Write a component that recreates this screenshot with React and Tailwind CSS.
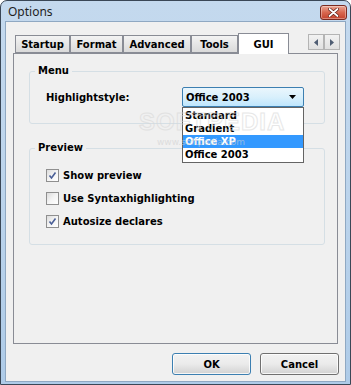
const UI = { fontFamily: '"DejaVu Sans", Verdana, sans-serif' }

export default function App() {
  return (
    <div className="h-[385px] w-[351px] overflow-hidden bg-white" style={UI}>
      <div className="flex h-full flex-col rounded-t-[7px] border border-[#3a4756] bg-gradient-to-b from-[#c4d9ee] via-[#bcd4ec] to-[#aecbe8] px-[4px] pb-[2px]">
        <TitleBar />
        <div className="relative flex flex-1 flex-col border border-[#8fa8c2] bg-[#f0f0f0] px-[7px] pt-[11px]">
          <TabStrip />
          <div className="flex h-[291px] flex-col border border-[#898c95] bg-[#f0f0f0] pl-[15px] pr-[12px]">
            <Group label="Menu" className="mt-[11px] h-[59px]">
              <div className="flex items-center pl-[16px] pt-[10px]">
                <span className="w-[136px] text-[10px] font-bold text-black">Highlightstyle:</span>
                <Combo />
              </div>
            </Group>
            <Group label="Preview" className="mt-[18px] h-[103px]">
              <div className="flex flex-col gap-[10px] pl-[16px] pt-[15px]">
                <Check checked label="Show preview" />
                <Check label="Use Syntaxhighlighting" />
                <Check checked label="Autosize declares" />
              </div>
            </Group>
          </div>
          <div className="mr-[-1px] mt-[9px] flex justify-end gap-[9px]">
            <Button label="OK" primary />
            <Button label="Cancel" />
          </div>
          <Watermark />
        </div>
      </div>
    </div>
  )
}

function TitleBar() {
  return (
    <div className="flex h-[20px] items-center justify-between">
      <span className="pl-[3px] pt-[1px] text-[12px] text-[#1e1e1e]" style={{ fontFamily: '"Noto Sans", "Open Sans", sans-serif' }}>Options</span>
      <div className="mr-[-1px] mt-[3px] flex h-[15px] w-[27px] items-center justify-center rounded-[3px] border border-[#7a2a20] bg-gradient-to-b from-[#eaa593] via-[#d8674f] to-[#c4412b] shadow-[inset_0_0_0_1px_rgba(255,255,255,0.35)]">
        <svg width="11" height="9" viewBox="0 0 11 9">
          <path d="M1.5 1 L9.5 8 M9.5 1 L1.5 8" stroke="#5a1a12" strokeWidth="3.2" strokeLinecap="round" />
          <path d="M1.5 1 L9.5 8 M9.5 1 L1.5 8" stroke="#ffffff" strokeWidth="1.8" strokeLinecap="round" />
        </svg>
      </div>
    </div>
  )
}

function TabStrip() {
  const tabs = [
    { name: 'Startup', w: 'w-[55px]' },
    { name: 'Format', w: 'w-[53px]' },
    { name: 'Advanced', w: 'w-[68px]' },
    { name: 'Tools', w: 'w-[47px]' },
  ]
  return (
    <div className="relative z-10 mb-[-1px] flex h-[21px] items-end pl-[2px]">
      {tabs.map((t) => (
        <div key={t.name} className={`${t.w} mb-[1px] flex h-[18px] items-center justify-center border border-[#898c95] bg-gradient-to-b from-[#f3f3f3] to-[#dadada] pt-[1px] text-[10px] font-bold text-black`}>
          {t.name}
        </div>
      ))}
      <div className="flex h-[21px] w-[51px] items-start justify-center border border-b-0 border-[#898c95] bg-white pt-[3px] text-[10px] font-bold text-black">
        GUI
      </div>
      <div className="ml-auto mr-[-2px] flex self-start pt-[1px]">
        <ArrowBtn dir="left" />
        <ArrowBtn dir="right" />
      </div>
    </div>
  )
}

function ArrowBtn({ dir }) {
  return (
    <div className="flex h-[16px] w-[16px] items-center justify-center border border-[#b4b4b4] bg-gradient-to-b from-[#f2f2f2] to-[#e0e0e0]">
      <svg width="4" height="7" viewBox="0 0 4 7">
        {dir === 'left' ? <path d="M4 0 L0 3.5 L4 7 Z" fill="#4f5d73" /> : <path d="M0 0 L4 3.5 L0 7 Z" fill="#4f5d73" />}
      </svg>
    </div>
  )
}

function Group({ label, className, children }) {
  return (
    <fieldset className={`rounded-[3px] border border-[#d5dfe5] px-0 ${className}`}>
      <legend className="ml-[5px] px-[3px] text-[10px] font-bold leading-[12px] text-black">{label}</legend>
      {children}
    </fieldset>
  )
}

function Combo() {
  const items = ['Standard', 'Gradient', 'Office XP', 'Office 2003']
  return (
    <div className="relative">
      <div className="flex h-[20px] w-[122px] items-center justify-between rounded-[2px] border border-[#3c7fb1] bg-gradient-to-b from-[#eaf6fd] via-[#d9f0fc] to-[#bee6fd] pl-[3px] pr-[7px] text-[10px] font-bold text-black">
        <span className="pt-[1px]">Office 2003</span>
        <svg width="7" height="4" viewBox="0 0 7 4">
          <path d="M0 0 L7 0 L3.5 4 Z" fill="#000" />
        </svg>
      </div>
      <div className="absolute left-0 top-[20px] z-20 w-[122px] border border-[#646464] bg-white py-[1px]">
        {items.map((it) => (
          <div key={it} className={`flex h-[13px] items-center pl-[2px] text-[10px] font-bold ${it === 'Office XP' ? 'bg-[#3399ff] text-white' : 'text-black'}`}>
            {it}
          </div>
        ))}
      </div>
    </div>
  )
}

function Check({ checked, label }) {
  return (
    <div className="flex h-[13px] items-center gap-[4px]">
      <div className="flex h-[13px] w-[13px] items-center justify-center border border-[#8f8f8f] bg-gradient-to-br from-[#dcdcdc] via-[#f4f4f4] to-[#ffffff] p-[1px]">
        {checked && (
          <svg width="9" height="9" viewBox="0 0 9 9">
            <path d="M1.5 4.5 L3.5 7 L7.5 1.5" stroke="#4a5f97" strokeWidth="1.6" fill="none" />
          </svg>
        )}
      </div>
      <span className="text-[10px] font-bold text-black">{label}</span>
    </div>
  )
}

function Button({ label, primary }) {
  return (
    <div className={`flex h-[22px] w-[79px] items-center justify-center rounded-[3px] border bg-gradient-to-b from-[#f2f2f2] via-[#ebebeb] to-[#d2d2d2] text-[10px] font-bold text-black shadow-[inset_0_0_0_1px_rgba(255,255,255,0.8)] ${primary ? 'border-[#3c7fb1]' : 'border-[#707070]'}`}>
      {label}
    </div>
  )
}

function Watermark() {
  return (
    <div className="pointer-events-none absolute left-[133px] top-[82px] z-30 flex flex-col items-start opacity-60">
      <span className="text-[24px] font-bold tracking-[1px] text-transparent" style={{ WebkitTextStroke: '1px #d8d8d8', fontFamily: '"Liberation Sans", sans-serif' }}>
        SOFTPEDIA
      </span>
      <span className="ml-[18px] mt-[-4px] text-[9px] text-[#d0d0d0]">www.softpedia.com</span>
    </div>
  )
}
